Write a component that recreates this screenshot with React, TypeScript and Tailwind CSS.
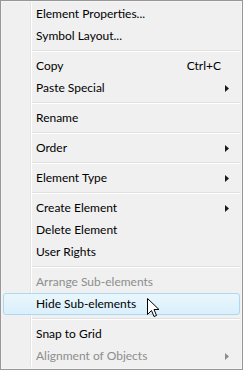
import { Fragment } from 'react';

type Item =
  | { type: 'sep' }
  | { type: 'item'; label: string; shortcut?: string; submenu?: boolean; disabled?: boolean; hover?: boolean };

const items: Item[] = [
  { type: 'item', label: 'Element Properties...' },
  { type: 'item', label: 'Symbol Layout...' },
  { type: 'sep' },
  { type: 'item', label: 'Copy', shortcut: 'Ctrl+C' },
  { type: 'item', label: 'Paste Special', submenu: true },
  { type: 'sep' },
  { type: 'item', label: 'Rename' },
  { type: 'sep' },
  { type: 'item', label: 'Order', submenu: true },
  { type: 'sep' },
  { type: 'item', label: 'Element Type', submenu: true },
  { type: 'sep' },
  { type: 'item', label: 'Create Element', submenu: true },
  { type: 'item', label: 'Delete Element' },
  { type: 'item', label: 'User Rights' },
  { type: 'sep' },
  { type: 'item', label: 'Arrange Sub-elements', disabled: true },
  { type: 'item', label: 'Hide Sub-elements', hover: true },
  { type: 'sep' },
  { type: 'item', label: 'Snap to Grid' },
  { type: 'item', label: 'Alignment of Objects', submenu: true, disabled: true },
];

function Arrow({ disabled }: { disabled?: boolean }) {
  return (
    <svg width="4" height="7" viewBox="0 0 4 7" className="shrink-0 ml-auto">
      <path d="M0 0 L4 3.5 L0 7 Z" fill={disabled ? '#8d8d8d' : '#1b1b1b'} />
    </svg>
  );
}

function Cursor() {
  return (
    <svg width="13" height="21" viewBox="0 0 13 21" className="absolute left-[146px] top-[297px]">
      <path
        d="M0.5 0.5 L0.5 16.5 L4.5 12.5 L7 18.5 L9.5 17.5 L7 11.5 L12 11.5 Z"
        fill="#fff"
        stroke="#000"
        strokeWidth="1"
      />
    </svg>
  );
}

export default function App() {
  return (
    <div className="relative w-[243px] h-[370px] bg-[#f0f0f0] border border-[#979797] font-['Segoe_UI','Lato',sans-serif] text-[12px] overflow-hidden">
      <div className="absolute inset-0 border border-[#f5f5f5] pointer-events-none" />
      {/* gutter line */}
      <div className="absolute left-[29px] top-[2px] bottom-[2px] w-px bg-[#e2e3e3]" />
      <div className="absolute left-[30px] top-[2px] bottom-[2px] w-px bg-white" />
      <div className="relative flex flex-col pt-[2px] px-[2px]">
        {items.map((it, i) =>
          it.type === 'sep' ? (
            <div key={i} className="h-[8px] flex flex-col justify-center pl-[29px]">
              <div className="h-px bg-[#e0e0e0]" />
              <div className="h-px bg-white" />
            </div>
          ) : (
            <Fragment key={i}>
              <div
                className={
                  'h-[22px] flex items-center pl-[32px] pr-[10px] rounded-[3px] border ' +
                  (it.hover
                    ? 'border-[#aed7f0] bg-gradient-to-b from-[#eaf6fd] to-[#d9f0fc]'
                    : 'border-transparent')
                }
              >
                <span className={'flex-1 leading-none ' + (it.disabled ? 'text-[#8d8d8d]' : 'text-[#000]')}>
                  {it.label}
                </span>
                {it.shortcut && <span className="mr-[8px] leading-none text-black">{it.shortcut}</span>}
                {it.submenu && <Arrow disabled={it.disabled} />}
              </div>
            </Fragment>
          )
        )}
      </div>
      <Cursor />
    </div>
  );
}
